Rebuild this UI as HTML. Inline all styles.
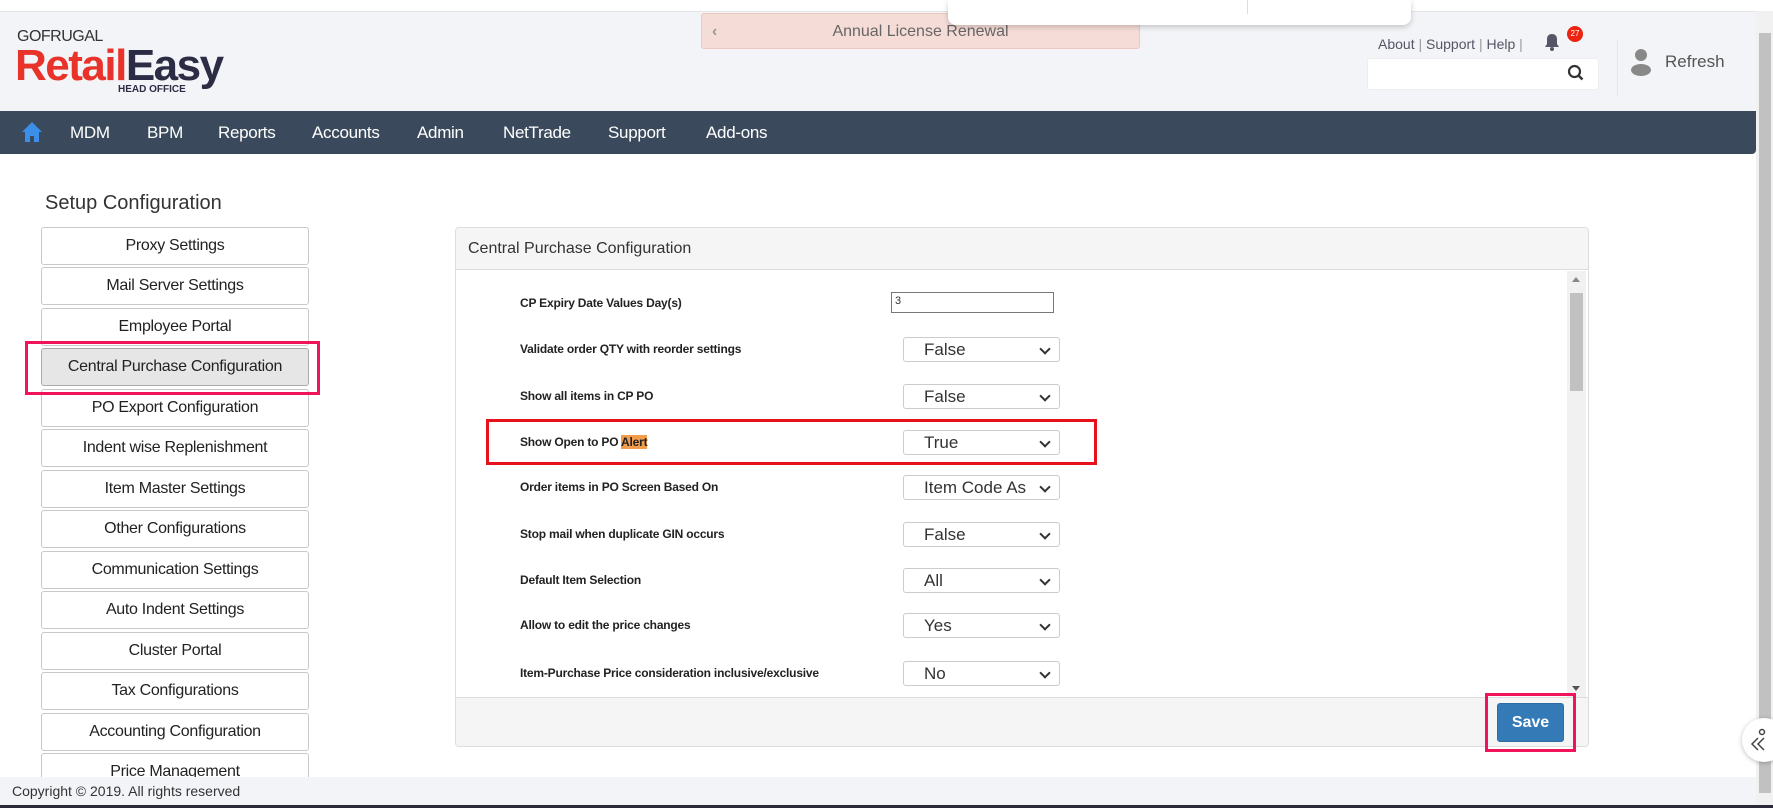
<!DOCTYPE html>
<html><head><meta charset="utf-8"><style>
*{box-sizing:border-box;margin:0;padding:0}
body{width:1773px;height:808px;overflow:hidden;background:#fff;font-family:"Liberation Sans",sans-serif;position:relative;color:#333}
.abs{position:absolute}
#hdr{left:0;top:11px;width:1756px;height:100px;background:#f3f4f7;border-top:1px solid #e3e5e8}
#nav{left:0;top:111px;width:1756px;height:43px;background:#3a4a5c;border-radius:0 0 4px 0}
.nv{position:absolute;top:12px;color:#fff;font-size:17px;letter-spacing:-0.3px}
.sb{position:absolute;left:41px;width:268px;height:38px;border:1px solid #c8c8c8;border-radius:3px;background:#fff;text-align:center;line-height:36px;font-size:16px;color:#222;letter-spacing:-0.3px}
.lbl{position:absolute;left:520px;font-size:12px;font-weight:bold;color:#222;letter-spacing:-0.2px}
.sel{position:absolute;left:903px;width:157px;height:25px;border:1px solid #ccc;border-radius:3px;background:#fff;font-size:17px;line-height:23px;padding-left:20px;color:#333}
.sel:after{content:"";position:absolute;right:10px;top:7px;width:6px;height:6px;border-right:2px solid #333;border-bottom:2px solid #333;transform:rotate(45deg)}
</style></head><body>
<div id="hdr" class="abs"></div>
<div class="abs" style="left:17px;top:28px;font-size:16px;color:#333;letter-spacing:-0.5px">GOFRUGAL</div>
<div class="abs" style="left:15px;top:43px;font-size:44px;font-weight:bold;letter-spacing:-1.5px;line-height:46px"><span style="color:#e8332a">Retail</span><span style="color:#2c2c44">Easy</span></div>
<div class="abs" style="left:118px;top:84px;font-size:10px;font-weight:bold;color:#2c2c44">HEAD OFFICE</div>
<div class="abs" style="left:701px;top:13px;width:439px;height:36px;background:#f6dcd6;border:1px solid #ecc8c0;border-radius:3px;color:#666;font-size:16px;text-align:center;line-height:36px">Annual License Renewal<span style="position:absolute;left:10px;color:#999;font-weight:bold">‹</span></div>
<div class="abs" style="left:948px;top:0;width:463px;height:25px;background:#fff;border-radius:0 0 8px 8px;box-shadow:0 2px 6px rgba(0,0,0,.2)"><div style="position:absolute;left:299px;top:0;width:1px;height:14px;background:#ddd"></div></div>
<div class="abs" style="left:1378px;top:36px;font-size:14px;color:#556">About <span style="color:#999">|</span> Support <span style="color:#999">|</span> Help <span style="color:#999">|</span></div>
<svg class="abs" style="left:1544px;top:33px" width="16" height="18" viewBox="0 0 16 18"><path d="M8 1c-3 0-5 2-5 5v5l-2 3h14l-2-3V6c0-3-2-5-5-5z" fill="#556"/><circle cx="8" cy="16" r="2" fill="#556"/></svg>
<div class="abs" style="left:1567px;top:26px;width:16px;height:16px;border-radius:50%;background:#e21;color:#fff;font-size:8px;text-align:center;line-height:16px">27</div>
<div class="abs" style="left:1367px;top:58px;width:232px;height:32px;background:#fff;border-radius:3px;border:1px solid #eee"></div>
<svg class="abs" style="left:1567px;top:64px" width="18" height="18" viewBox="0 0 18 18"><circle cx="7.5" cy="7.5" r="5.5" fill="none" stroke="#333" stroke-width="2.2"/><path d="M11.5 11.5l4 4" stroke="#333" stroke-width="2.4"/></svg>
<div class="abs" style="left:1617px;top:40px;width:1px;height:56px;background:#e6e6e6"></div>
<svg class="abs" style="left:1630px;top:48px" width="22" height="28" viewBox="0 0 22 28"><circle cx="11" cy="7" r="6" fill="#888"/><ellipse cx="11" cy="22" rx="10" ry="6" fill="#888"/></svg>
<div class="abs" style="left:1665px;top:52px;font-size:17px;color:#555">Refresh</div>
<div id="nav" class="abs">
<svg style="position:absolute;left:21px;top:10px" width="22" height="22" viewBox="0 0 22 22"><path d="M11 1L1 11h3v10h5v-6h4v6h5V11h3z" fill="#3b8fe8"/></svg>
<span class="nv" style="left:70px">MDM</span><span class="nv" style="left:147px">BPM</span><span class="nv" style="left:218px">Reports</span><span class="nv" style="left:312px">Accounts</span><span class="nv" style="left:417px">Admin</span><span class="nv" style="left:503px">NetTrade</span><span class="nv" style="left:608px">Support</span><span class="nv" style="left:706px">Add-ons</span>
</div>
<div class="abs" style="left:45px;top:192px;font-size:20px;color:#333">Setup Configuration</div>
<div class="sb" style="top:227px">Proxy Settings</div>
<div class="sb" style="top:267px">Mail Server Settings</div>
<div class="sb" style="top:308px">Employee Portal</div>
<div class="sb" style="top:348px;background:#e6e6e6;border-color:#aaa">Central Purchase Configuration</div>
<div class="sb" style="top:389px">PO Export Configuration</div>
<div class="sb" style="top:429px">Indent wise Replenishment</div>
<div class="sb" style="top:470px">Item Master Settings</div>
<div class="sb" style="top:510px">Other Configurations</div>
<div class="sb" style="top:551px">Communication Settings</div>
<div class="sb" style="top:591px">Auto Indent Settings</div>
<div class="sb" style="top:632px">Cluster Portal</div>
<div class="sb" style="top:672px">Tax Configurations</div>
<div class="sb" style="top:713px">Accounting Configuration</div>
<div class="sb" style="top:753px">Price Management</div>
<div class="abs" style="left:25px;top:341px;width:295px;height:54px;border:3px solid #f0145a"></div>
<div class="abs" style="left:455px;top:227px;width:1134px;height:520px;border:1px solid #ddd;border-radius:4px;background:#fff;overflow:hidden">
<div style="height:42px;background:#f5f5f5;border-bottom:1px solid #ddd;font-size:16px;line-height:42px;padding-left:12px;color:#333">Central Purchase Configuration</div>
<div style="position:absolute;left:0;top:469px;width:100%;height:51px;background:#f5f5f5;border-top:1px solid #ddd"></div>
<div style="position:absolute;left:1111px;top:43px;width:19px;height:426px;background:#f1f1f1"><div style="position:absolute;left:3px;top:22px;width:13px;height:98px;background:#c1c1c1"></div><div style="position:absolute;left:5px;top:6px;border:4px solid transparent;border-bottom:5px solid #888;border-top:0"></div><div style="position:absolute;left:5px;bottom:6px;border:4px solid transparent;border-top:5px solid #555;border-bottom:0"></div></div>
</div>
<div class="lbl" style="top:296px">CP Expiry Date Values Day(s)</div>
<div class="abs" style="left:891px;top:292px;width:163px;height:21px;border:1px solid #777;font-size:11px;padding:2px 3px">3</div>
<div class="lbl" style="top:342px">Validate order QTY with reorder settings</div><div class="sel" style="top:337px">False</div>
<div class="lbl" style="top:389px">Show all items in CP PO</div><div class="sel" style="top:384px">False</div>
<div class="lbl" style="top:435px">Show Open to PO <span style="background:#f29c4c">Alert</span></div><div class="sel" style="top:430px">True</div>
<div class="lbl" style="top:480px">Order items in PO Screen Based On</div><div class="sel" style="top:475px;overflow:hidden;white-space:nowrap">Item Code As</div>
<div class="lbl" style="top:527px">Stop mail when duplicate GIN occurs</div><div class="sel" style="top:522px">False</div>
<div class="lbl" style="top:573px">Default Item Selection</div><div class="sel" style="top:568px">All</div>
<div class="lbl" style="top:618px">Allow to edit the price changes</div><div class="sel" style="top:613px">Yes</div>
<div class="lbl" style="top:666px">Item-Purchase Price consideration inclusive/exclusive</div><div class="sel" style="top:661px">No</div>
<div class="abs" style="left:486px;top:419px;width:611px;height:46px;border:3px solid #e8101a"></div>
<div class="abs" style="left:1497px;top:703px;width:67px;height:39px;background:#337ab7;border:1px solid #2e6da4;border-radius:3px;color:#fff;font-weight:bold;font-size:16px;text-align:center;line-height:37px">Save</div>
<div class="abs" style="left:1485px;top:693px;width:91px;height:59px;border:3px solid #f0145a"></div>
<div class="abs" style="left:0;top:777px;width:1756px;height:28px;background:#f3f4f7;font-size:14px;color:#333;padding:6px 12px">Copyright © 2019. All rights reserved</div>
<div class="abs" style="left:0;top:805px;width:1773px;height:3px;background:#2a2a3a"></div>
<div class="abs" style="left:1756px;top:11px;width:17px;height:794px;background:#f1f1f1"><div style="position:absolute;left:3px;top:22px;width:12px;height:760px;background:#c1c1c1"></div></div>
<div class="abs" style="left:1742px;top:718px;width:44px;height:44px;border-radius:50%;background:#fff;box-shadow:0 1px 5px rgba(0,0,0,.25)"><svg style="position:absolute;left:8px;top:10px" width="24" height="24" viewBox="0 0 24 24"><circle cx="12" cy="4" r="2.5" fill="none" stroke="#444" stroke-width="1.5"/><path d="M8 10l-6 6 6 6M14 10l-6 6 6 6" fill="none" stroke="#444" stroke-width="1.5"/></svg></div>
</body></html>
